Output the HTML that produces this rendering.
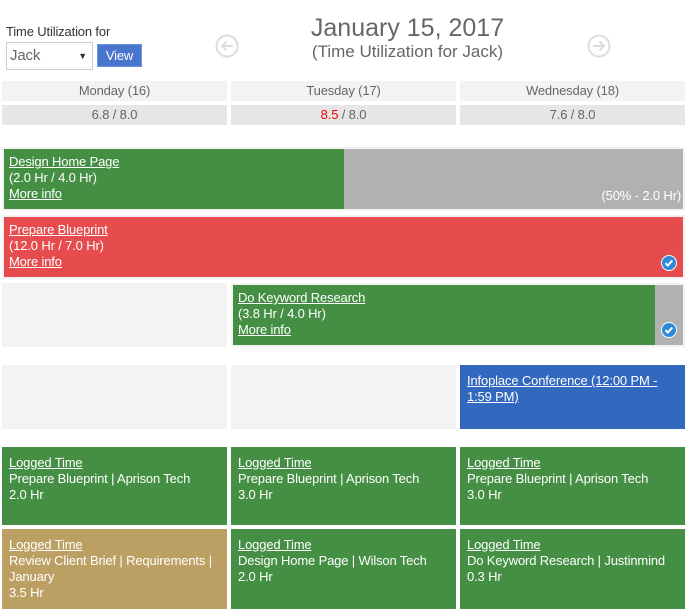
<!DOCTYPE html>
<html><head><meta charset="utf-8"><style>
*{margin:0;padding:0;box-sizing:border-box}
body{width:687px;height:609px;background:#fff;font-family:"Liberation Sans",sans-serif;font-size:13px;position:relative;overflow:hidden;color:#fff;letter-spacing:-0.15px}
.a{position:absolute}
.c{line-height:16px;padding:5px 5px}
u{text-decoration:underline}
.hd{background:#f3f3f3;color:#666;text-align:center;line-height:20px}
.tt{background:#e6e6e6;color:#666;text-align:center;line-height:20px}
.g{background:#448f43}
.chk{position:absolute;width:16px;height:16px;border-radius:50%;background:#2e8ad6;border:1px solid #fff}
</style></head><body>
<div class="a" style="left:6px;top:24px;color:#333;font-size:13px">Time Utilization for</div>
<div class="a" style="left:6px;top:42px;width:87px;height:28px;border:1px solid #ccc;color:#666;font-size:15px;line-height:26px;padding-left:3px">Jack<span style="position:absolute;right:5px;top:0;font-size:9px;color:#333">▼</span></div>
<div class="a" style="left:97px;top:44px;width:45px;height:23px;background:#4a75cc;border:1px solid #6c94e0;font-size:13px;line-height:21px;text-align:center">View</div>
<svg class="a" style="left:215px;top:34px" width="24" height="24" viewBox="0 0 24 24"><circle cx="12" cy="12" r="10.5" fill="none" stroke="#ddd" stroke-width="2"/><path d="M18 12H7M11.5 7.5L7 12l4.5 4.5" fill="none" stroke="#ddd" stroke-width="2"/></svg>
<svg class="a" style="left:587px;top:34px" width="24" height="24" viewBox="0 0 24 24"><circle cx="12" cy="12" r="10.5" fill="none" stroke="#ddd" stroke-width="2"/><path d="M6 12h11M12.5 7.5L17 12l-4.5 4.5" fill="none" stroke="#ddd" stroke-width="2"/></svg>
<div class="a" style="left:240px;top:13px;width:335px;text-align:center;color:#666;font-size:25px;line-height:30px;letter-spacing:0">January 15, 2017</div>
<div class="a" style="left:240px;top:42px;width:335px;text-align:center;color:#666;font-size:17px;line-height:20px;letter-spacing:0">(Time Utilization for Jack)</div>

<div class="a hd" style="left:2px;top:81px;width:225px;height:20px">Monday (16)</div>
<div class="a hd" style="left:231px;top:81px;width:225px;height:20px">Tuesday (17)</div>
<div class="a hd" style="left:460px;top:81px;width:225px;height:20px">Wednesday (18)</div>
<div class="a tt" style="left:2px;top:105px;width:225px;height:20px">6.8 / 8.0</div>
<div class="a tt" style="left:231px;top:105px;width:225px;height:20px"><span style="color:#e00">8.5</span> / 8.0</div>
<div class="a tt" style="left:460px;top:105px;width:225px;height:20px">7.6 / 8.0</div>

<div class="a" style="left:2px;top:147px;width:683px;height:64px;background:#f3f3f3"></div>
<div class="a" style="left:344px;top:149px;width:339px;height:60px;background:#b1b1b1"></div>
<div class="a c g" style="left:4px;top:149px;width:340px;height:60px;padding-top:5px"><u>Design Home Page</u><br>(2.0 Hr / 4.0 Hr)<br><u>More info</u></div>
<div class="a" style="right:6px;top:188px">(50% - 2.0 Hr)</div>

<div class="a" style="left:2px;top:215px;width:683px;height:64px;background:#f3f3f3"></div>
<div class="a c" style="left:4px;top:217px;width:679px;height:60px;background:#e64c4d"><u>Prepare Blueprint</u><br>(12.0 Hr / 7.0 Hr)<br><u>More info</u></div>
<div class="chk" style="left:661px;top:255px"><svg width="14" height="14" viewBox="0 0 14 14" style="display:block"><path d="M3.5 7.2l2.3 2.3 4.5-5" stroke="#fff" stroke-width="2" fill="none"/></svg></div>

<div class="a" style="left:2px;top:283px;width:225px;height:64px;background:#f3f3f3"></div>
<div class="a" style="left:231px;top:283px;width:454px;height:64px;background:#f3f3f3"></div>
<div class="a" style="left:655px;top:285px;width:28px;height:60px;background:#b1b1b1"></div>
<div class="a c g" style="left:233px;top:285px;width:422px;height:60px"><u>Do Keyword Research</u><br>(3.8 Hr / 4.0 Hr)<br><u>More info</u></div>
<div class="chk" style="left:661px;top:322px"><svg width="14" height="14" viewBox="0 0 14 14" style="display:block"><path d="M3.5 7.2l2.3 2.3 4.5-5" stroke="#fff" stroke-width="2" fill="none"/></svg></div>

<div class="a" style="left:2px;top:365px;width:225px;height:64px;background:#f3f3f3"></div>
<div class="a" style="left:231px;top:365px;width:225px;height:64px;background:#f3f3f3"></div>
<div class="a c" style="left:460px;top:365px;width:225px;height:64px;background:#3268bd;padding:8px 7px"><u>Infoplace Conference (12:00 PM -<br>1:59 PM)</u></div>

<div class="a c g" style="left:2px;top:447px;width:225px;height:78px;padding:8px 7px"><u>Logged Time</u><br>Prepare Blueprint | Aprison Tech<br>2.0 Hr</div>
<div class="a c g" style="left:231px;top:447px;width:225px;height:78px;padding:8px 7px"><u>Logged Time</u><br>Prepare Blueprint | Aprison Tech<br>3.0 Hr</div>
<div class="a c g" style="left:460px;top:447px;width:225px;height:78px;padding:8px 7px"><u>Logged Time</u><br>Prepare Blueprint | Aprison Tech<br>3.0 Hr</div>
<div class="a c" style="left:2px;top:529px;width:225px;height:80px;padding:8px 7px;background:#bc9f62"><u>Logged Time</u><br>Review Client Brief | Requirements |<br>January<br>3.5 Hr</div>
<div class="a c g" style="left:231px;top:529px;width:225px;height:80px;padding:8px 7px"><u>Logged Time</u><br>Design Home Page | Wilson Tech<br>2.0 Hr</div>
<div class="a c g" style="left:460px;top:529px;width:225px;height:80px;padding:8px 7px"><u>Logged Time</u><br>Do Keyword Research | Justinmind<br>0.3 Hr</div>
</body></html>
